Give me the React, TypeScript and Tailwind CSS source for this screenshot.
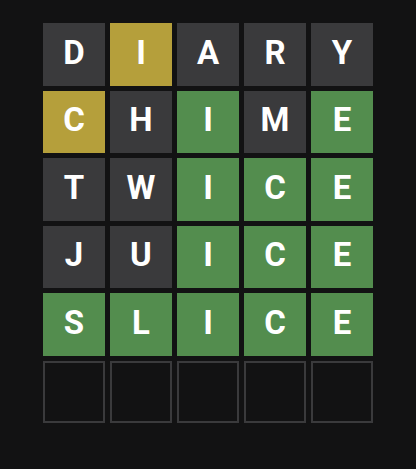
const rows: { letter: string; state: 'absent' | 'present' | 'correct' }[][] = [
  [
    { letter: 'D', state: 'absent' },
    { letter: 'I', state: 'present' },
    { letter: 'A', state: 'absent' },
    { letter: 'R', state: 'absent' },
    { letter: 'Y', state: 'absent' },
  ],
  [
    { letter: 'C', state: 'present' },
    { letter: 'H', state: 'absent' },
    { letter: 'I', state: 'correct' },
    { letter: 'M', state: 'absent' },
    { letter: 'E', state: 'correct' },
  ],
  [
    { letter: 'T', state: 'absent' },
    { letter: 'W', state: 'absent' },
    { letter: 'I', state: 'correct' },
    { letter: 'C', state: 'correct' },
    { letter: 'E', state: 'correct' },
  ],
  [
    { letter: 'J', state: 'absent' },
    { letter: 'U', state: 'absent' },
    { letter: 'I', state: 'correct' },
    { letter: 'C', state: 'correct' },
    { letter: 'E', state: 'correct' },
  ],
  [
    { letter: 'S', state: 'correct' },
    { letter: 'L', state: 'correct' },
    { letter: 'I', state: 'correct' },
    { letter: 'C', state: 'correct' },
    { letter: 'E', state: 'correct' },
  ],
];

const stateClass = {
  absent: 'bg-[#3a3a3c]',
  present: 'bg-[#b59f3b]',
  correct: 'bg-[#538d4e]',
};

const App = () => {
  return (
    <div className="min-h-[469px] w-full bg-[#121213] flex justify-center pt-[23px]">
      <div className="w-[330px] h-[400px] grid grid-rows-6 gap-[5px]">
        {rows.map((row, i) => (
          <div key={i} className="grid grid-cols-5 gap-[5px]">
            {row.map((tile, j) => (
              <div
                key={j}
                className={`${stateClass[tile.state]} flex items-center justify-center text-white font-bold text-[33px] leading-none uppercase pb-[4px]`}
                style={{ fontFamily: 'Roboto, "Liberation Sans", sans-serif' }}
              >
                {tile.letter}
              </div>
            ))}
          </div>
        ))}
        <div className="grid grid-cols-5 gap-[5px]">
          {[0, 1, 2, 3, 4].map((k) => (
            <div key={k} className="border-2 border-[#3a3a3c]" />
          ))}
        </div>
      </div>
    </div>
  );
};

export default App;
